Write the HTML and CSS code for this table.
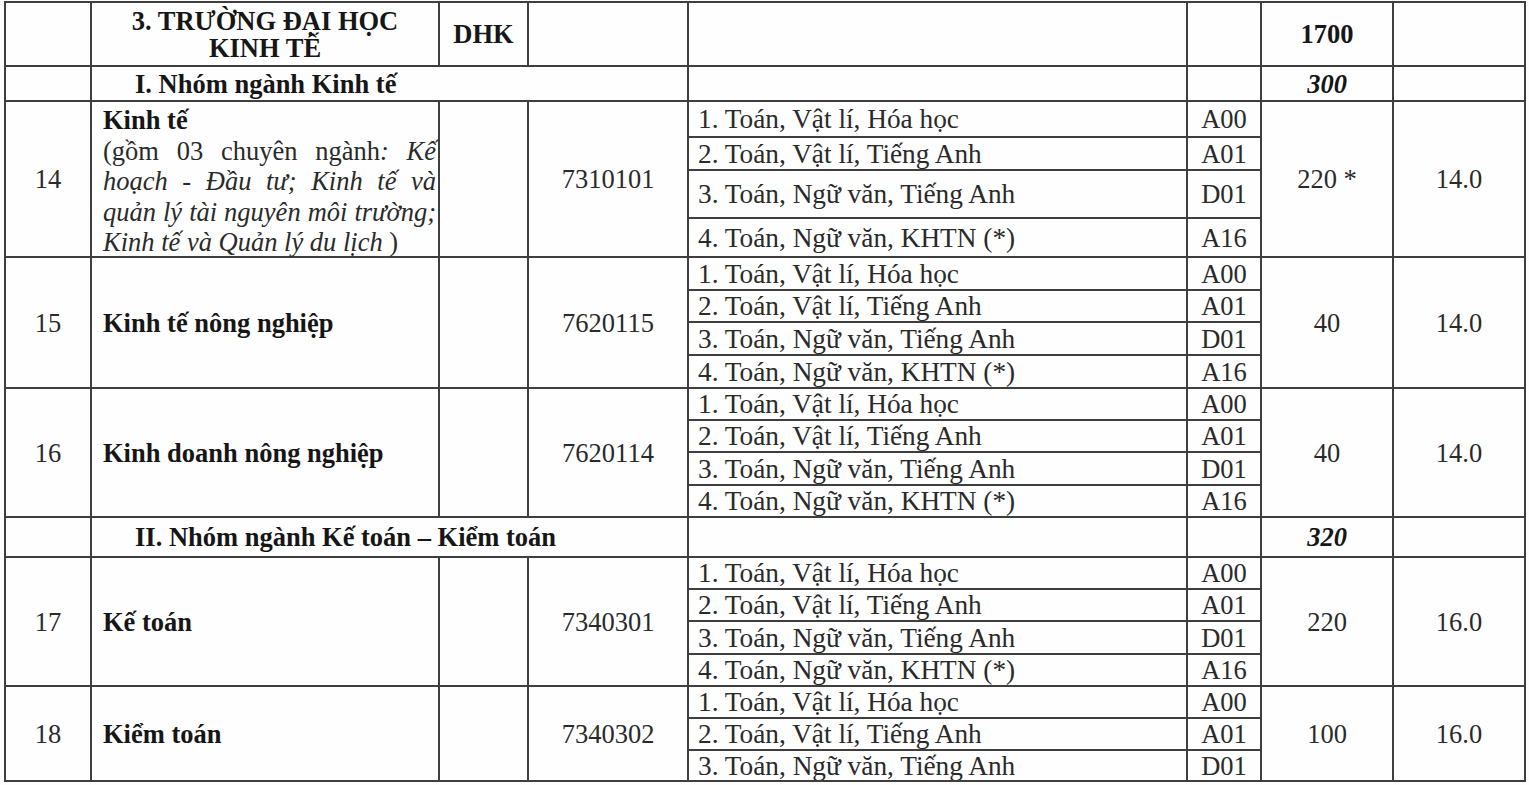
FILE: index.html
```html
<!DOCTYPE html>
<html lang="vi">
<head>
<meta charset="utf-8">
<title>Trường Đại học Kinh tế</title>
<link rel="stylesheet" href="styles.css">
</head>
<body>
<div class="sheet">
  <div class="grid">
    <!-- row: school -->
    <div class="cell"></div>
    <div class="cell center bold school">3. TRƯỜNG ĐẠI HỌC<br>KINH TẾ</div>
    <div class="cell center bold">DHK</div>
    <div class="cell"></div>
    <div class="cell"></div>
    <div class="cell"></div>
    <div class="cell center bold">1700</div>
    <div class="cell"></div>

    <!-- group I -->
    <div class="cell"></div>
    <div class="cell c3 bold group">I. Nhóm ngành Kinh tế</div>
    <div class="cell"></div>
    <div class="cell"></div>
    <div class="cell center bold italic">300</div>
    <div class="cell"></div>

    <!-- 14 -->
    <div class="cell r4 center">14</div>
    <div class="cell r4 name desc"><div><b>Kinh tế</b><br>(gồm 03 chuyên ngành<i>: Kế hoạch - Đầu tư; Kinh tế và quản lý tài nguyên môi trường; Kinh tế và Quản lý du lịch </i>)</div></div>
    <div class="cell r4"></div>
    <div class="cell r4 center">7310101</div>
    <div class="cell combo">1. Toán, Vật lí, Hóa học</div>
    <div class="cell center">A00</div>
    <div class="cell r4 center">220 *</div>
    <div class="cell r4 center">14.0</div>
    <div class="cell combo">2. Toán, Vật lí, Tiếng Anh</div>
    <div class="cell center">A01</div>
    <div class="cell combo">3. Toán, Ngữ văn, Tiếng Anh</div>
    <div class="cell center">D01</div>
    <div class="cell combo">4. Toán, Ngữ văn, KHTN (*)</div>
    <div class="cell center">A16</div>

    <!-- 15 -->
    <div class="cell r4 center">15</div>
    <div class="cell r4 name bold">Kinh tế nông nghiệp</div>
    <div class="cell r4"></div>
    <div class="cell r4 center">7620115</div>
    <div class="cell combo">1. Toán, Vật lí, Hóa học</div>
    <div class="cell center">A00</div>
    <div class="cell r4 center">40</div>
    <div class="cell r4 center">14.0</div>
    <div class="cell combo">2. Toán, Vật lí, Tiếng Anh</div>
    <div class="cell center">A01</div>
    <div class="cell combo">3. Toán, Ngữ văn, Tiếng Anh</div>
    <div class="cell center">D01</div>
    <div class="cell combo">4. Toán, Ngữ văn, KHTN (*)</div>
    <div class="cell center">A16</div>

    <!-- 16 -->
    <div class="cell r4 center">16</div>
    <div class="cell r4 name bold">Kinh doanh nông nghiệp</div>
    <div class="cell r4"></div>
    <div class="cell r4 center">7620114</div>
    <div class="cell combo">1. Toán, Vật lí, Hóa học</div>
    <div class="cell center">A00</div>
    <div class="cell r4 center">40</div>
    <div class="cell r4 center">14.0</div>
    <div class="cell combo">2. Toán, Vật lí, Tiếng Anh</div>
    <div class="cell center">A01</div>
    <div class="cell combo">3. Toán, Ngữ văn, Tiếng Anh</div>
    <div class="cell center">D01</div>
    <div class="cell combo">4. Toán, Ngữ văn, KHTN (*)</div>
    <div class="cell center">A16</div>

    <!-- group II -->
    <div class="cell"></div>
    <div class="cell c3 bold group">II. Nhóm ngành Kế toán – Kiểm toán</div>
    <div class="cell"></div>
    <div class="cell"></div>
    <div class="cell center bold italic">320</div>
    <div class="cell"></div>

    <!-- 17 -->
    <div class="cell r4 center">17</div>
    <div class="cell r4 name bold">Kế toán</div>
    <div class="cell r4"></div>
    <div class="cell r4 center">7340301</div>
    <div class="cell combo">1. Toán, Vật lí, Hóa học</div>
    <div class="cell center">A00</div>
    <div class="cell r4 center">220</div>
    <div class="cell r4 center">16.0</div>
    <div class="cell combo">2. Toán, Vật lí, Tiếng Anh</div>
    <div class="cell center">A01</div>
    <div class="cell combo">3. Toán, Ngữ văn, Tiếng Anh</div>
    <div class="cell center">D01</div>
    <div class="cell combo">4. Toán, Ngữ văn, KHTN (*)</div>
    <div class="cell center">A16</div>

    <!-- 18 -->
    <div class="cell r3 center">18</div>
    <div class="cell r3 name bold">Kiểm toán</div>
    <div class="cell r3"></div>
    <div class="cell r3 center">7340302</div>
    <div class="cell combo">1. Toán, Vật lí, Hóa học</div>
    <div class="cell center">A00</div>
    <div class="cell r3 center">100</div>
    <div class="cell r3 center">16.0</div>
    <div class="cell combo">2. Toán, Vật lí, Tiếng Anh</div>
    <div class="cell center">A01</div>
    <div class="cell combo">3. Toán, Ngữ văn, Tiếng Anh</div>
    <div class="cell center">D01</div>
  </div>
</div>
</body>
</html>
```

FILE: styles.css
```css
html, body {
  margin: 0;
  padding: 0;
  background: #fdfdfd;
}
body {
  width: 1529px;
  height: 785px;
  overflow: hidden;
  font-family: "Liberation Serif", "Times New Roman", serif;
  color: #2a2a2a;
}
.sheet {
  padding: 1px 0 0 4px;
}
.grid {
  display: grid;
  width: max-content;
  background: #3e3e3e;
  padding: 2px;
  gap: 2px;
  grid-template-columns: 84px 346px 87px 158px 497px 72px 130px 130px;
  grid-template-rows:
    62px 33px
    34px 31px 46px 37px
    31px 30px 31px 31px
    30px 30px 31px 30px
    38px
    30px 30px 31px 30px
    30px 30px 29px;
}
.cell {
  background: #fefefe;
  display: flex;
  align-items: center;
  font-size: 26.5px;
  line-height: 30px;
  white-space: nowrap;
  overflow: hidden;
}
.center {
  justify-content: center;
  text-align: center;
}
.bold {
  font-weight: bold;
  color: #161616;
}
.italic {
  font-style: italic;
}
.school {
  line-height: 27px;
  padding-top: 2px;
  white-space: normal;
}
.group {
  padding-left: 43px;
}
.name {
  padding-left: 11px;
  padding-right: 2px;
}
.desc {
  white-space: normal;
  text-align: justify;
  align-items: flex-start;
  padding-top: 3px;
  line-height: 30.5px;
  overflow: visible;
}
.desc b {
  color: #161616;
}
.combo {
  padding-left: 9px;
  font-size: 27.3px;
}
.c3 {
  grid-column: span 3;
}
.r4 {
  grid-row: span 4;
}
.r3 {
  grid-row: span 3;
}
```
